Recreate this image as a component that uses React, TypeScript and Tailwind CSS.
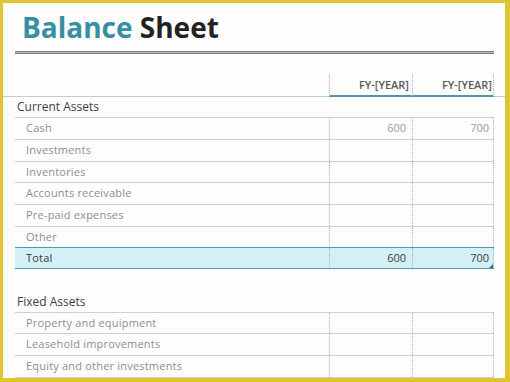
import React from 'react';

type RowProps = {
  label: string;
  a?: string;
  b?: string;
  h: string;
};

const Row = ({ label, a, b, h }: RowProps) => (
  <div className={`ml-[12px] w-[479px] flex border-b border-[#cfcfcf] ${h}`}>
    <div className="w-[314px] pl-[11px] flex items-center text-[11px] text-[#8e8e8e] tracking-[0.2px]">{label}</div>
    <div className="w-[83px] border-l border-dotted border-[#b0b0b0] flex items-center justify-end pr-[6px] text-[11px] text-[#9a9a9a]">{a}</div>
    <div className="w-[82px] border-x border-dotted border-[#b0b0b0] flex items-center justify-end pr-[4px] text-[11px] text-[#9a9a9a]">{b}</div>
  </div>
);

const SectionRow = ({ label, h }: { label: string; h: string }) => (
  <div className={`ml-[12px] w-[479px] flex items-center border-b border-[#cfcfcf] pl-[2px] text-[12px] text-[#3d3d3d] ${h}`}>
    {label}
  </div>
);

export default function App() {
  return (
    <div className="w-[510px] h-[382px] overflow-hidden bg-[#e1c530] pt-[3px] pl-[3px] pr-[5px] pb-[4px]">
      <div className="h-full bg-[#fdfdfd] overflow-hidden font-['Open_Sans',sans-serif]">
        {/* Title */}
        <div className="h-[48px] pl-[19px] pt-[7px]">
          <h1 className="text-[28px] leading-[34px] font-bold text-[#3590a2]">
            Balance <span className="text-[#222222]">Sheet</span>
          </h1>
        </div>
        <div className="ml-[12px] w-[479px] h-[3px] border-y border-[#7d7d7d] bg-[#b9b9b9]" />

        {/* Column headers */}
        <div className="h-[43px] flex items-end border-b border-[#c9c9c9]">
          <div className="w-[326px]" />
          <div className="w-[83px] h-[22px] -mb-px border-l border-dotted border-[#b0b0b0] border-b-2 border-b-[#4a97a8] [border-bottom-style:solid] flex items-center justify-end pr-[3px] text-[11px] font-semibold text-[#595959]">
            FY-[YEAR]
          </div>
          <div className="w-[82px] h-[22px] -mb-px border-x border-dotted border-[#b0b0b0] border-b-2 border-b-[#4a97a8] [border-bottom-style:solid] flex items-center justify-end pr-[1px] text-[11px] font-semibold text-[#595959]">
            FY-[YEAR]
          </div>
        </div>

        <SectionRow label="Current Assets" h="h-[21px]" />
        <Row label="Cash" a="600" b="700" h="h-[22px]" />
        <Row label="Investments" h="h-[22px]" />
        <Row label="Inventories" h="h-[21px]" />
        <Row label="Accounts receivable" h="h-[22px]" />
        <Row label="Pre-paid expenses" h="h-[22px]" />
        <div className="ml-[12px] w-[479px] flex h-[20px]">
          <div className="w-[314px] pl-[11px] flex items-center text-[11px] text-[#8e8e8e] tracking-[0.2px]">Other</div>
          <div className="w-[83px] border-l border-dotted border-[#b0b0b0]" />
          <div className="w-[82px] border-x border-dotted border-[#b0b0b0]" />
        </div>

        {/* Total */}
        <div className="ml-[12px] w-[479px] h-[22px] flex border-y border-[#4f9cad] bg-[#d4eff6]">
          <div className="w-[314px] pl-[11px] flex items-center text-[11px] font-medium text-[#3a3a3a] tracking-[0.2px]">Total</div>
          <div className="w-[83px] border-l border-dotted border-[#9fb8be] flex items-center justify-end pr-[6px] text-[11px] font-medium text-[#404040]">600</div>
          <div className="relative w-[82px] border-x border-dotted border-[#9fb8be] flex items-center justify-end pr-[4px] text-[11px] font-medium text-[#404040]">
            700
            <div className="absolute right-0 bottom-0 w-0 h-0 border-l-[4px] border-l-transparent border-b-[4px] border-b-[#2d69a3]" />
          </div>
        </div>

        <div className="h-[22px]" />
        <SectionRow label="Fixed Assets" h="h-[22px]" />
        <Row label="Property and equipment" h="h-[21px]" />
        <Row label="Leasehold improvements" h="h-[22px]" />
        <Row label="Equity and other investments" h="h-[22px]" />
      </div>
    </div>
  );
}
